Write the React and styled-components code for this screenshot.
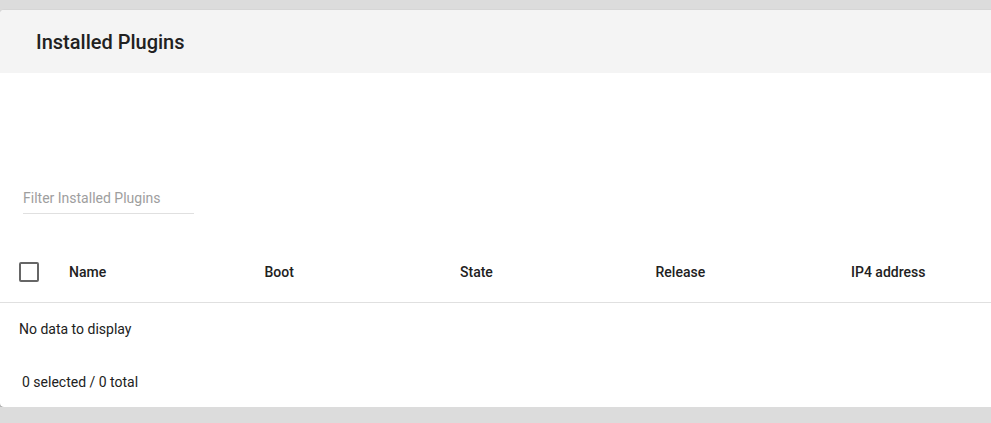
import React from "react";
import { styled, createGlobalStyle } from "styled-components";

const columns = ["Name", "Boot", "State", "Release", "IP4 address"];

export default function App() {
  return (
    <>
      <Global />
      <Card>
        <CardHeader>
          <h2>Installed Plugins</h2>
        </CardHeader>
        <FilterField>
          <input placeholder="Filter Installed Plugins" />
        </FilterField>
        <Table>
          <HeadRow>
            <CheckCell>
              <Checkbox />
            </CheckCell>
            {columns.map((c) => (
              <HeadCell key={c}>{c}</HeadCell>
            ))}
          </HeadRow>
          <EmptyRow>No data to display</EmptyRow>
        </Table>
        <Footer>0 selected / 0 total</Footer>
      </Card>
    </>
  );
}

const Global = createGlobalStyle`
  html, body {
    margin: 0;
    background: #dcdcdc;
    overflow: hidden;
    font-family: Roboto, "Liberation Sans", sans-serif;
    color: #212121;
  }
`;

const Card = styled.div`
  margin-top: 10px;
  width: 1040px;
  background: #fff;
  border-radius: 4px;
  box-shadow: 0 1px 2px rgba(0, 0, 0, 0.45);
`;

const CardHeader = styled.div`
  height: 63px;
  background: #f4f4f4;
  border-radius: 4px 4px 0 0;
  display: flex;
  align-items: center;
  padding-left: 36px;
  h2 {
    margin: 0;
    font-size: 20px;
    font-weight: 500;
    color: #212121;
  }
`;

const FilterField = styled.div`
  padding: 109px 0 0 23px;
  input {
    display: block;
    width: 171px;
    height: 32px;
    box-sizing: border-box;
    border: 0;
    border-bottom: 1px solid #e0e0e0;
    outline: none;
    padding: 0;
    font-family: inherit;
    font-size: 14px;
    color: #212121;
    background: transparent;
    &::placeholder {
      color: #9e9e9e;
    }
  }
`;

const Table = styled.div`
  margin-top: 28px;
`;

const HeadRow = styled.div`
  display: grid;
  grid-template-columns: 57px repeat(5, 195.5px);
  height: 60px;
  align-items: center;
  border-bottom: 1px solid #e0e0e0;
`;

const CheckCell = styled.div`
  padding-left: 19px;
  display: flex;
  align-items: center;
`;

const Checkbox = styled.span`
  width: 20px;
  height: 20px;
  box-sizing: border-box;
  border: 2px solid #666;
  border-radius: 2px;
`;

const HeadCell = styled.div`
  padding-left: 12px;
  font-size: 14px;
  font-weight: 500;
  color: #212121;
`;

const EmptyRow = styled.div`
  height: 52px;
  display: flex;
  align-items: center;
  padding-left: 19px;
  font-size: 14px;
`;

const Footer = styled.div`
  height: 52px;
  padding-top: 2px;
  box-sizing: border-box;
  display: flex;
  align-items: center;
  padding-left: 22px;
  font-size: 14px;
`;
